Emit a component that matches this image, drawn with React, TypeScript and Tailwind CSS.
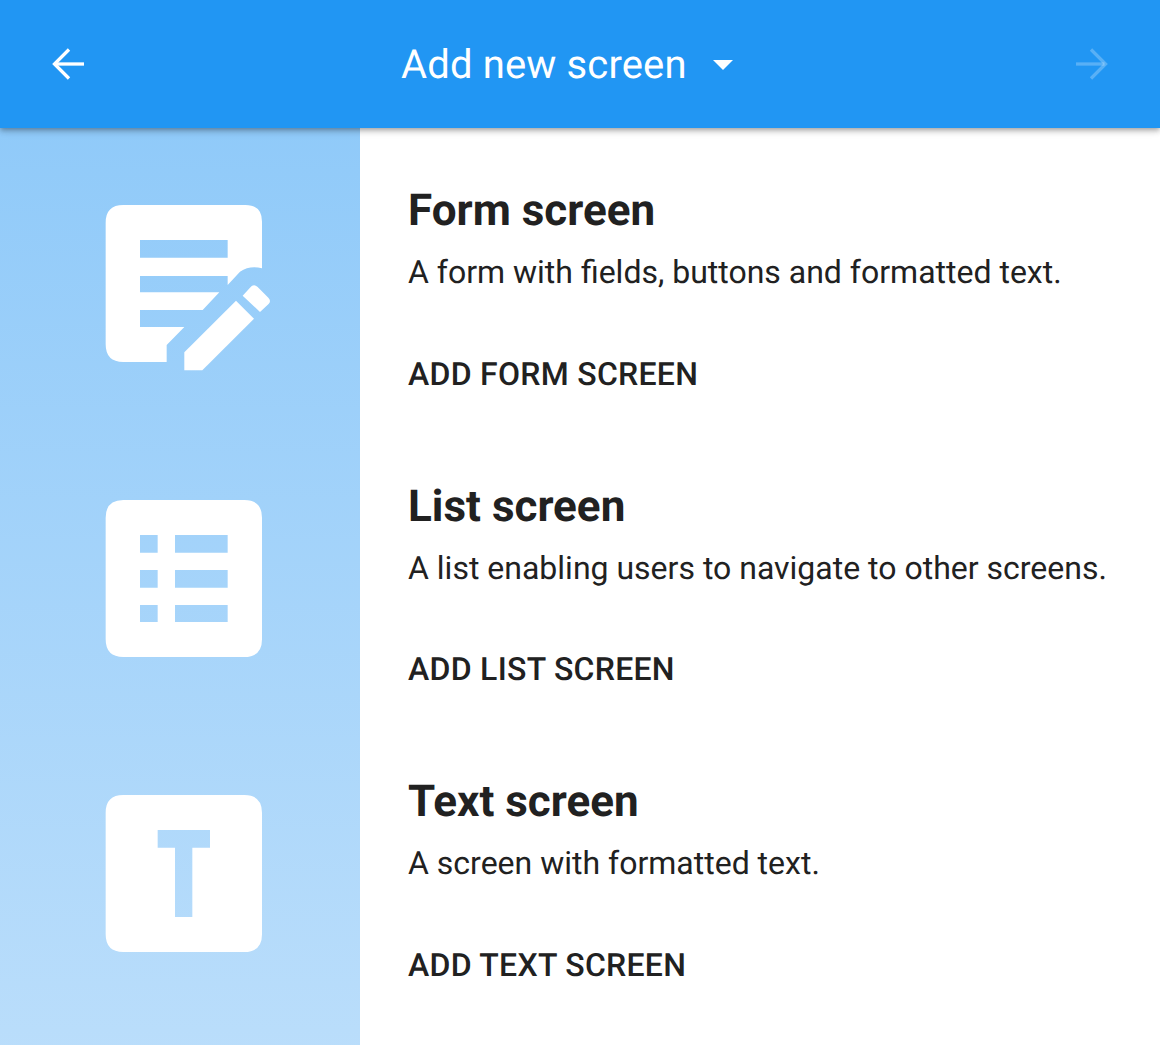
const font = { fontFamily: "Roboto, sans-serif" };

function FormIcon() {
  return (
    <svg viewBox="0 0 600 600" className="h-[200px] w-[200px] shrink-0">
      <path
        fill="#fff"
        fillRule="evenodd"
        d="M100 45H466Q516 45 516 95V235Q480 225 450 245L413 285V258H150V307H388L338 360H150V411H283L230 465V516H100Q47 516 47 463V98Q47 45 100 45ZM150 150V203H413V150Z"
      />
      <path fill="#fff" d="M283 541V487L438 332L492 386L337 541Z" />
      <path fill="#fff" d="M458 317L480 293Q491 280 503 291L535 323Q545 333 535 343L510 366Z" />
    </svg>
  );
}

function ListIcon() {
  return (
    <svg viewBox="0 0 600 600" className="h-[200px] w-[200px] shrink-0">
      <path
        fill="#fff"
        fillRule="evenodd"
        d="M100 45H463Q516 45 516 98V463Q516 516 463 516H100Q47 516 47 463V98Q47 45 100 45ZM150 150V203H203V150ZM255 150V203H413V150ZM150 255V308H203V255ZM255 255V308H413V255ZM150 360V411H203V360ZM255 360V411H413V360Z"
      />
    </svg>
  );
}

function TextIcon() {
  return (
    <svg viewBox="0 0 600 600" className="h-[200px] w-[200px] shrink-0">
      <path
        fill="#fff"
        fillRule="evenodd"
        d="M100 45H463Q516 45 516 98V463Q516 516 463 516H100Q47 516 47 463V98Q47 45 100 45ZM203 150V203H255V411H307V203H360V150Z"
      />
    </svg>
  );
}

const rows = [
  { title: "Form screen", desc: "A form with fields, buttons and formatted text.", action: "ADD FORM SCREEN", Icon: FormIcon },
  { title: "List screen", desc: "A list enabling users to navigate to other screens.", action: "ADD LIST SCREEN", Icon: ListIcon },
  { title: "Text screen", desc: "A screen with formatted text.", action: "ADD TEXT SCREEN", Icon: TextIcon },
];

export default function App() {
  return (
    <div className="flex h-[1045px] w-[1160px] flex-col overflow-hidden bg-white text-[#212121] [text-rendering:geometricPrecision]" style={font}>
      <header className="relative z-10 flex h-[128px] shrink-0 items-center bg-[#2196f3] pl-[44px] pr-[44px] text-white shadow-[0_2px_4px_-1px_rgba(0,0,0,0.2),0_4px_5px_0_rgba(0,0,0,0.14),0_1px_10px_0_rgba(0,0,0,0.12)]">
        <svg viewBox="0 0 48 48" className="h-12 w-12 shrink-0" fill="none" stroke="#fff" strokeWidth="3.3">
          <path d="M40 24H11.5" />
          <path d="M25 9.5L10.5 24L25 38.5" />
        </svg>
        <div className="ml-[309px] flex items-center">
          <span className="pt-[2px] text-[40px] font-normal leading-[48px] tracking-[0.14px]">Add new screen</span>
          <svg viewBox="0 0 48 48" className="ml-[12px] h-12 w-12 shrink-0" fill="#fff">
            <path d="M14 20H34L24 30Z" />
          </svg>
        </div>
        <svg viewBox="0 0 48 48" className="ml-auto h-12 w-12 shrink-0" fill="none" stroke="#fff" strokeOpacity="0.25" strokeWidth="3.3">
          <path d="M8 24H36.5" />
          <path d="M23 9.5L37.5 24L23 38.5" />
        </svg>
      </header>
      <div className="flex flex-1">
        <aside className="flex w-[360px] shrink-0 flex-col bg-gradient-to-b from-[#90caf9] to-[#bbdefb] pl-[90px] pt-[62px]">
          {rows.map(({ title, Icon }) => (
            <div key={title} className="h-[295px]">
              <Icon />
            </div>
          ))}
        </aside>
        <main className="flex flex-1 flex-col pl-[48px] pt-[56px]">
          {rows.map(({ title, desc, action }) => (
            <section key={title} className="h-[295.5px]">
              <h2 className="text-[44px] font-bold leading-[52px]">{title}</h2>
              <p className="mt-[16px] text-[32px] leading-[40px]">{desc}</p>
              <p className="mt-[61.75px] text-[32px] font-medium leading-[40px] tracking-[0.28px]">{action}</p>
            </section>
          ))}
        </main>
      </div>
    </div>
  );
}
